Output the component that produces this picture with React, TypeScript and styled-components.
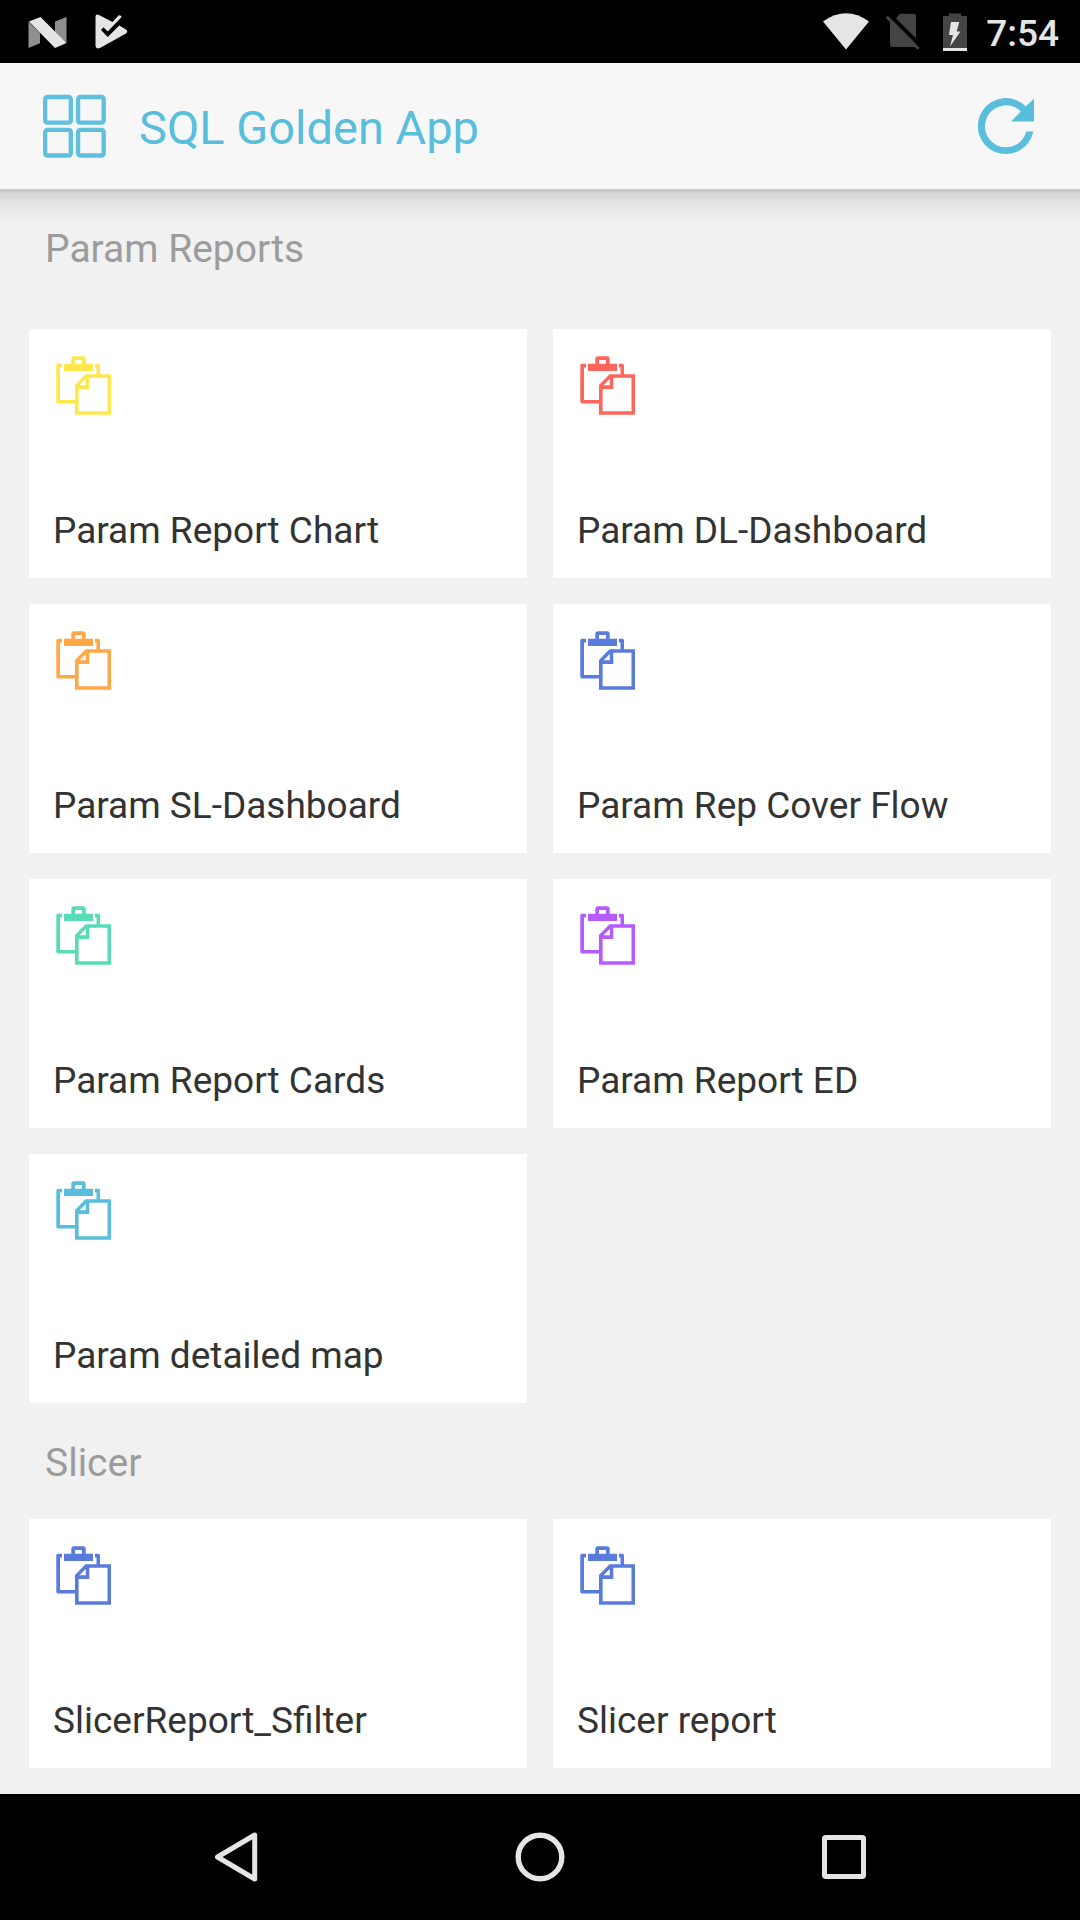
import React from "react";
import styled, { createGlobalStyle } from "styled-components";

const GlobalStyle = createGlobalStyle`
  * { box-sizing: border-box; }
  body {
    margin: 0;
    background: #f1f1f1;
    font-family: Roboto, "Noto Sans", sans-serif;
  }
`;

const Screen = styled.div`
  display: flex;
  flex-direction: column;
  width: 1080px;
  height: 1920px;
  overflow: hidden;
  background: #f1f1f1;
`;

const StatusBar = styled.div`
  display: flex;
  flex: none;
  align-items: center;
  justify-content: space-between;
  height: 63px;
  padding: 0 21px 0 26px;
  background: #000;
`;

const StatusGroup = styled.div<{ $gap: number }>`
  display: flex;
  align-items: center;
  gap: ${({ $gap }) => $gap}px;
`;

const Clock = styled.span`
  color: #e5e5e5;
  font-size: 37px;
  font-weight: 500;
  line-height: 44px;
  padding-top: 4px;
`;

const Glyph = styled.svg`
  display: block;
  flex: none;
`;

const AppBar = styled.header`
  display: flex;
  flex: none;
  align-items: center;
  height: 126px;
  padding: 0 45px 0 42px;
  background: #f7f7f7;
`;

const AppTitle = styled.h1`
  flex: 1;
  margin: 0;
  padding: 4px 0 0 33px;
  color: #59bddc;
  font-size: 47px;
  font-weight: 400;
  line-height: 56px;
`;

const Content = styled.main`
  flex: 1;
  padding: 0 29px;
  background: linear-gradient(#c8c8c8, #cacaca 3px, #d6d6d6 4px, #e2e2e2 13px, #ececec 26px, #f1f1f1 38px);
`;

const SectionTitle = styled.h2<{ $height: number; $top: number }>`
  height: ${({ $height }) => $height}px;
  margin: 0;
  padding: ${({ $top }) => $top}px 0 0 16px;
  color: #9c9c9c;
  font-size: 39px;
  font-weight: 400;
  line-height: 46px;
`;

const CardGrid = styled.div`
  display: grid;
  grid-template-columns: 498px 498px;
  grid-auto-rows: 249px;
  gap: 26px;
`;

const Card = styled.article`
  display: flex;
  flex-direction: column;
  justify-content: space-between;
  padding: 24px 24px 25px;
  background: #fff;
`;

const CardTitle = styled.h3`
  margin: 0;
  color: #333;
  font-size: 37px;
  font-weight: 400;
  line-height: 44px;
  white-space: nowrap;
`;

const NavBar = styled.nav`
  display: flex;
  flex: none;
  align-items: center;
  justify-content: center;
  gap: 257px;
  height: 126px;
  background: #000;
`;

function NougatIcon() {
  return (
    <Glyph width="42" height="32" viewBox="26 15 42 32">
      <path fill="#8f8f8f" d="M28.5 20.5 40 32V42.300L28.500 47zM55 20.500 66.500 16V42L55 31z" />
      <path fill="#e5e5e5" d="M29 20.500 40.500 16 66.500 42 55 47z" />
    </Glyph>
  );
}

function PlayCheckIcon() {
  return (
    <Glyph width="34" height="36" viewBox="94 14 34 36">
      <path
        fill="#e5e5e5"
        d="M95.500 17Q95.500 13.500 99 15L112.500 22 118.500 15.500Q120.500 14.500 121.700 17L107.700 31.500 103.500 27.300 101 30 107.700 37 119.300 25.500 126 29.500Q128.500 31.500 126 33.500L100 48Q96 49.500 95.500 46z"
      />
    </Glyph>
  );
}

function WifiIcon() {
  return (
    <Glyph width="46" height="37" viewBox="823 12.500 46 37">
      <path fill="#e5e5e5" d="M823 21Q846 4.500 869 21L846 49z" />
    </Glyph>
  );
}

function NoSimIcon() {
  return (
    <Glyph width="42" height="37" viewBox="885 13.500 42 37">
      <path fill="#444" d="M900 14.300H913Q916 14.300 916 17.300V47.500H893Q890 47.500 890 44.500V21H893.800z" />
      <path fill="none" stroke="#000" strokeWidth="4" d="M886.200 11.800 923 48.600" />
      <path fill="none" stroke="#444" strokeWidth="2.800" d="M886.700 17.300 918.500 49.200" />
    </Glyph>
  );
}

function BatteryIcon() {
  return (
    <Glyph width="27" height="38" viewBox="943 12 27 38">
      <path fill="#444" d="M949 12.500h12v2.500h6v32h-24V15h6z" />
      <path fill="#e5e5e5" d="M943 47h24v3h-24zM951 21H959.300L956.700 30.500H960.500L950 45.500 953 34H949z" />
    </Glyph>
  );
}

function GridIcon() {
  return (
    <Glyph width="64" height="64" viewBox="42 94 64 64" fill="none" stroke="#5fc0de" strokeWidth="4.300">
      <rect x="45.200" y="97" width="25.600" height="25.600" rx="2.200" />
      <rect x="78.100" y="97" width="25.600" height="25.600" rx="2.200" />
      <rect x="45.200" y="129.900" width="25.600" height="25.600" rx="2.200" />
      <rect x="78.100" y="129.900" width="25.600" height="25.600" rx="2.200" />
    </Glyph>
  );
}

function RefreshIcon() {
  return (
    <Glyph width="57" height="57" viewBox="978 97.500 57 57">
      <path
        fill="#59bddc"
        d="M1025.800 106A28 28 0 1 0 1033.300 131H1026.300A21 21 0 1 1 1020.800 111L1011 121H1034V98z"
      />
    </Glyph>
  );
}

function PasteIcon({ color }: { color: string }) {
  return (
    <Glyph width="60" height="64" viewBox="24 24 60 64" fill={color} fillRule="evenodd">
      <path d="M42.300 34.700V30Q42.300 27.300 45 27.300H54Q56.700 27.300 56.700 30V34.700H64V42H35V34.700zM46 34.700H53V31H46z" />
      <path d="M33 34.700V38.500H31V71H46V74.500H29Q27.300 74.500 27.300 72.800V36.400Q27.300 34.700 29 34.700z" />
      <path d="M66 34.700H69.500Q71 34.700 71 36.400V46H67.500V38.500H66z" />
      <path d="M56.500 45.300H82V85.700H46V56zM60.300 48.800V60H49.600V82.200H78.500V48.800zM50.500 56.300H56.800V50z" />
    </Glyph>
  );
}

function BackIcon() {
  return (
    <Glyph width="44" height="50" viewBox="214 1832 44 50">
      <path
        fill="none"
        stroke="#e5e5e5"
        strokeWidth="5"
        strokeLinejoin="round"
        d="M254.700 1835V1879L217.500 1857z"
      />
    </Glyph>
  );
}

function HomeIcon() {
  return (
    <Glyph width="50" height="50" viewBox="0 0 50 50">
      <circle cx="25" cy="25" r="21.800" fill="none" stroke="#e5e5e5" strokeWidth="5.400" />
    </Glyph>
  );
}

function RecentIcon() {
  return (
    <Glyph width="44" height="44" viewBox="0 0 44 44">
      <rect x="2.500" y="2.500" width="39" height="39" rx="1.500" fill="none" stroke="#e5e5e5" strokeWidth="5" />
    </Glyph>
  );
}

type Report = { title: string; color: string };

const paramReports: Report[] = [
  { title: "Param Report Chart", color: "#ffe74c" },
  { title: "Param DL-Dashboard", color: "#ff665b" },
  { title: "Param SL-Dashboard", color: "#ffa845" },
  { title: "Param Rep Cover Flow", color: "#587bdc" },
  { title: "Param Report Cards", color: "#58dcb8" },
  { title: "Param Report ED", color: "#b65bff" },
  { title: "Param detailed map", color: "#59bddc" },
];

const slicerReports: Report[] = [
  { title: "SlicerReport_Sfilter", color: "#587bdc" },
  { title: "Slicer report", color: "#587bdc" },
];

function ReportCards({ reports }: { reports: Report[] }) {
  return (
    <CardGrid>
      {reports.map(({ title, color }) => (
        <Card key={title}>
          <PasteIcon color={color} />
          <CardTitle>{title}</CardTitle>
        </Card>
      ))}
    </CardGrid>
  );
}

export default function App() {
  return (
    <Screen>
      <GlobalStyle />
      <StatusBar>
        <StatusGroup $gap={26}>
          <NougatIcon />
          <PlayCheckIcon />
        </StatusGroup>
        <StatusGroup $gap={16}>
          <WifiIcon />
          <NoSimIcon />
          <BatteryIcon />
          <Clock>7:54</Clock>
        </StatusGroup>
      </StatusBar>
      <AppBar>
        <GridIcon />
        <AppTitle>SQL Golden App</AppTitle>
        <RefreshIcon />
      </AppBar>
      <Content>
        <SectionTitle $height={140} $top={37}>Param Reports</SectionTitle>
        <ReportCards reports={paramReports} />
        <SectionTitle $height={116} $top={37}>Slicer</SectionTitle>
        <ReportCards reports={slicerReports} />
      </Content>
      <NavBar>
        <BackIcon />
        <HomeIcon />
        <RecentIcon />
      </NavBar>
    </Screen>
  );
}
